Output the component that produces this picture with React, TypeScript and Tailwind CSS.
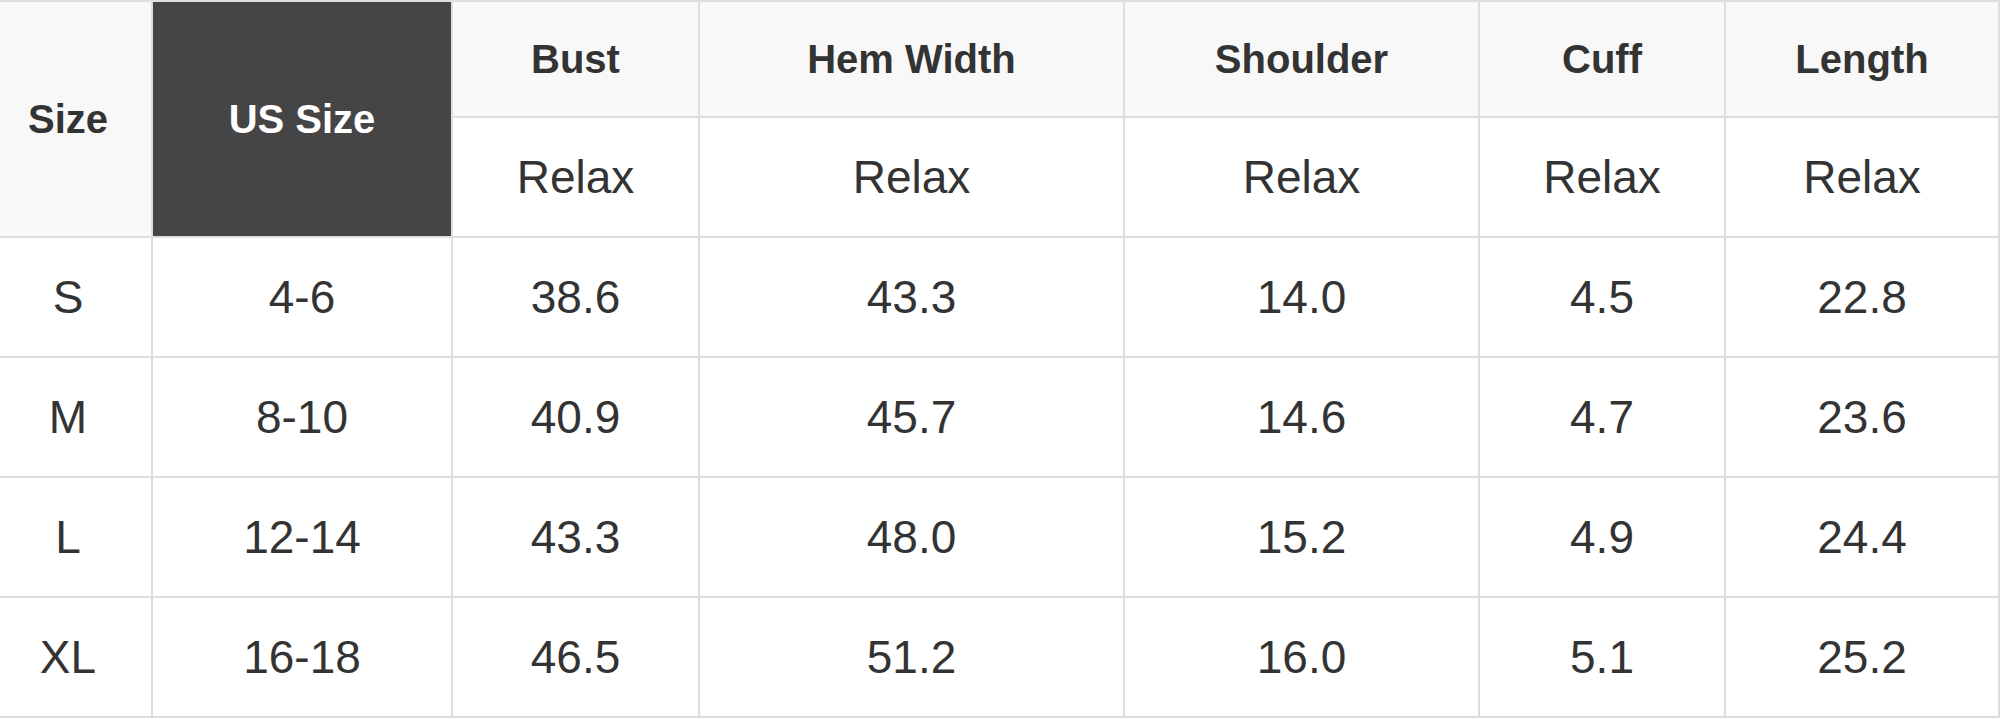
const heads = ["Bust", "Hem Width", "Shoulder", "Cuff", "Length"];

const rows = [
  ["S", "4-6", "38.6", "43.3", "14.0", "4.5", "22.8"],
  ["M", "8-10", "40.9", "45.7", "14.6", "4.7", "23.6"],
  ["L", "12-14", "43.3", "48.0", "15.2", "4.9", "24.4"],
  ["XL", "16-18", "46.5", "51.2", "16.0", "5.1", "25.2"],
];

export default function App() {
  return (
    <div className="w-[2000px] h-[719px] bg-white font-['Liberation_Sans',Arial,sans-serif] text-[#333]">
      <div className="grid grid-cols-[151px_298px_245px_423px_353px_244px_272px] grid-rows-[114px_118px_118px_118px_118px_118px] gap-[2px] bg-[#dedede] pt-[2px] pr-[2px] pb-[2px]">
        {/* header */}
        <div className="row-span-2 flex items-center justify-center bg-[#f8f8f8] pr-[15px] text-[40px] font-bold">
          Size
        </div>
        <div className="row-span-2 flex items-center justify-center bg-[#454545] text-[40px] font-bold text-white">
          US Size
        </div>
        {heads.map((h) => (
          <div key={h} className="flex items-center justify-center bg-[#f8f8f8] text-[40px] font-bold">
            {h}
          </div>
        ))}
        {heads.map((h) => (
          <div key={h + "-fit"} className="flex items-center justify-center bg-white text-[46px]">
            Relax
          </div>
        ))}

        {/* body */}
        {rows.map((r) =>
          r.map((v, i) => (
            <div
              key={r[0] + i}
              className={
                i === 0
                  ? "flex items-center justify-center bg-white pr-[15px] text-[46px]"
                  : "flex items-center justify-center bg-white text-[46px]"
              }
            >
              {v}
            </div>
          ))
        )}
      </div>
    </div>
  );
}
